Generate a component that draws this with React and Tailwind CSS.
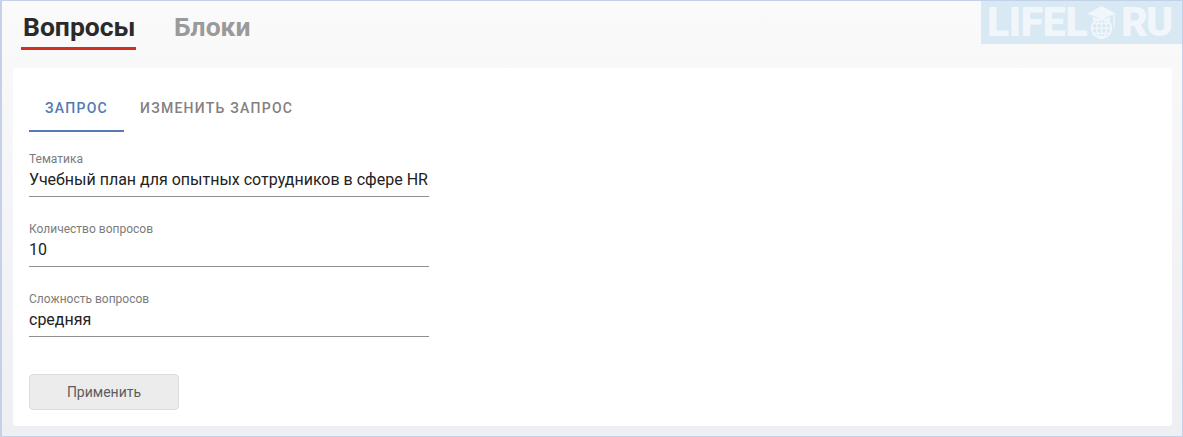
import React from 'react'

const fields = [
    { label: 'Тематика', value: 'Учебный план для опытных сотрудников в сфере HR' },
    { label: 'Количество вопросов', value: '10' },
    { label: 'Сложность вопросов', value: 'средняя' },
]

function Field({ label, value }) {
    return (
        <div className="w-[400px] h-[45px] border-b border-[#8f8f8f]">
            <div className="text-[12px] leading-[14px] text-[#7c7c7c]">{label}</div>
            <div className="mt-[3px] text-[16px] leading-[22px] text-[#222222]">{value}</div>
        </div>
    )
}

function Logo() {
    return (
        <div className="absolute top-0 right-[-1px] w-[202px] h-[43px] bg-[#d8e9f4] flex items-center pl-[6px] text-[#f1f6fa] font-black text-[41px] leading-[43px] whitespace-nowrap">
            <span className="tracking-[-0.4px]">LIFEL</span>
            <svg width="31" height="33" viewBox="0 0 32 34" className="shrink-0 mr-[3px]">
                <path d="M15 0 L30 8 L15 13 L0 8 Z" fill="currentColor" />
                <path d="M6 11 L15 15 L24 11 L24 15 L6 15 Z" fill="currentColor" />
                <path d="M28 9 V21" stroke="currentColor" strokeWidth="1.5" />
                <circle cx="15" cy="23" r="10" fill="none" stroke="currentColor" strokeWidth="2" />
                <ellipse cx="15" cy="23" rx="5" ry="10" fill="none" stroke="currentColor" strokeWidth="1.5" />
                <path d="M15 14 V33 M5 23 H25 M7 18 H23 M7 28 H23" stroke="currentColor" strokeWidth="1.5" />
            </svg>
            <span className="tracking-[-2px]">RU</span>
        </div>
    )
}

export default function App() {
    return (
        <div className="relative w-[1183px] h-[437px] overflow-hidden font-['Roboto',sans-serif] bg-gradient-to-b from-[#fafafa] to-[#eeeff3] border-t border-l-2 border-r border-b border-[#c3d2e8]">
            <Logo />

            <header className="flex h-[67px] pl-[19px] gap-[38px]">
                <div className="h-[49px] pl-[2px] w-[115px] border-b-[3px] border-[#d32f20] text-[26.5px] leading-[52px] font-bold text-[#2a2a2a] whitespace-nowrap">
                    Вопросы
                </div>
                <div className="text-[26.5px] leading-[52px] font-bold text-[#9a9a9a]">Блоки</div>
            </header>

            <main className="ml-[11px] mr-[10px] h-[358px] bg-white rounded-[4px] pl-[16px] pt-[16px]">
                <nav className="flex h-[48px] text-[14px] font-medium tracking-[1.25px] leading-[48px]">
                    <div className="w-[95px] text-center text-[#5479b3] border-b-2 border-[#5479b3]">ЗАПРОС</div>
                    <div className="pl-[16px] text-[#85807f]">ИЗМЕНИТЬ ЗАПРОС</div>
                </nav>

                <div className="mt-[20px] flex flex-col gap-[25px]">
                    {fields.map((f) => (
                        <Field key={f.label} label={f.label} value={f.value} />
                    ))}
                </div>

                <button className="mt-[37px] w-[150px] h-[36px] rounded-[4px] bg-[#ececec] border border-[#dcdcdc] text-[14px] text-[#5c5c5c]">
                    Применить
                </button>
            </main>
        </div>
    )
}
